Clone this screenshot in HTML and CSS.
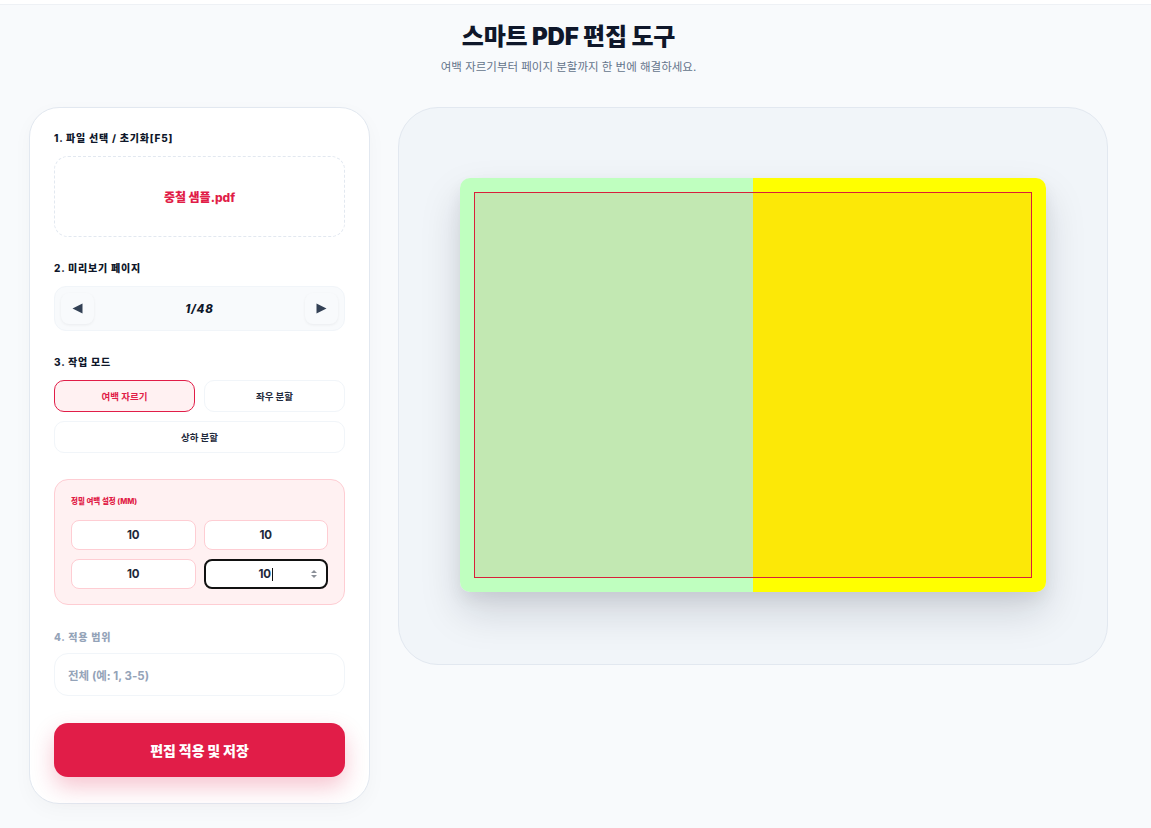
FILE: index.html
```html
<!DOCTYPE html>
<html lang="ko">
<head>
<meta charset="utf-8">
<title>스마트 PDF 편집 도구</title>
<link rel="stylesheet" href="styles.css">
</head>
<body>
<div class="topbar"></div>
<div class="wrap">
<header class="header">
  <h1 class="title">스마트 PDF 편집 도구</h1>
  <p class="subtitle">여백 자르기부터 페이지 분할까지 한 번에 해결하세요.</p>
</header>
<main class="layout">
  <aside class="panel">
    <section class="group">
      <div class="label">1. 파일 선택 / 초기화[F5]</div>
      <div class="dropzone">중철 샘플.pdf</div>
    </section>
    <section class="group">
      <div class="label">2. 미리보기 페이지</div>
      <div class="pager">
        <button class="pager-btn"><svg width="11" height="11" viewBox="0 0 11 11"><path d="M0.5 5.5 L10.5 0.5 L10.5 10.5 Z" fill="#334155"/></svg></button>
        <span class="pager-count">1/48</span>
        <button class="pager-btn"><svg width="11" height="11" viewBox="0 0 11 11"><path d="M10.5 5.5 L0.5 0.5 L0.5 10.5 Z" fill="#334155"/></svg></button>
      </div>
    </section>
    <section class="group">
      <div class="label">3. 작업 모드</div>
      <div class="modes">
        <button class="mode active">여백 자르기</button>
        <button class="mode">좌우 분할</button>
        <button class="mode wide">상하 분할</button>
      </div>
    </section>
    <section class="margins">
      <div class="margins-label">정밀 여백 설정 (MM)</div>
      <div class="margin-grid">
        <div class="num">10</div>
        <div class="num">10</div>
        <div class="num">10</div>
        <div class="num focus"><span class="num-val">10<span class="caret"></span></span><span class="spin"><svg width="8" height="12" viewBox="0 0 8 12"><path d="M1 5 L4 2 L7 5 Z" fill="#8a8f98"/><path d="M1 7 L4 10 L7 7 Z" fill="#8a8f98"/></svg></span></div>
      </div>
    </section>
    <section class="group range">
      <div class="label muted">4. 적용 범위</div>
      <div class="range-input">전체 (예: 1, 3-5)</div>
    </section>
    <button class="submit">편집 적용 및 저장</button>
  </aside>
  <section class="stage">
    <div class="page">
      <div class="half left"></div>
      <div class="half right"></div>
      <div class="crop"></div>
    </div>
  </section>
</main>
</div>
</body>
</html>
```
FILE: styles.css
```css
* { box-sizing: border-box; }
html, body { margin: 0; padding: 0; }
body {
  background: #f8fafc;
  font-family: Inter, "Noto Sans CJK KR", "Noto Sans", sans-serif;
  color: #0f172a;
  width: 1151px;
  height: 828px;
  overflow: hidden;
}
.topbar {
  height: 5px;
  background: #ffffff;
  border-bottom: 1px solid #eef1f5;
}
.wrap { width: 1137px; }
.header {
  text-align: center;
  padding-top: 17px;
}
.title {
  margin: 0;
  font-size: 24px;
  font-weight: 900;
  letter-spacing: -0.2px;
  line-height: 30px;
  color: #0f172a;
}
.subtitle {
  margin: 7px 0 0;
  font-size: 11.5px;
  line-height: 16px;
  color: #64748b;
}
.layout {
  display: flex;
  align-items: flex-start;
  gap: 28px;
  padding-left: 29px;
  margin-top: 32px;
}
.panel {
  width: 341px;
  background: #ffffff;
  border: 1px solid #e2e8f0;
  border-radius: 30px;
  padding: 24px 24px 26px;
  display: flex;
  flex-direction: column;
  box-shadow: 0 6px 20px rgba(15, 23, 42, 0.03);
}
.group { margin-bottom: 25px; }
.label {
  font-size: 10px;
  font-weight: 800;
  letter-spacing: 0.8px;
  color: #0f172a;
  line-height: 12px;
  margin-bottom: 12px;
}
.label.muted { color: #94a3b8; margin-bottom: 10px; }
.dropzone {
  height: 81px;
  border: 1px dashed #e2e8f0;
  border-radius: 14px;
  display: flex;
  align-items: center;
  justify-content: center;
  color: #e11d48;
  font-size: 12px;
  font-weight: 800;
}
.pager {
  height: 45px;
  background: #f8fafc;
  border: 1px solid #f1f5f9;
  border-radius: 12px;
  display: flex;
  align-items: center;
  justify-content: space-between;
  padding: 0 6px;
}
.pager-btn {
  width: 33px;
  height: 31px;
  border: none;
  border-radius: 8px;
  background: #f8fafc;
  box-shadow: 0 1px 3px rgba(15, 23, 42, 0.06);
  padding: 0;
  display: flex;
  align-items: center;
  justify-content: center;
}
.pager-count {
  font-size: 11.5px;
  font-weight: 800;
  font-style: italic;
  letter-spacing: 0.8px;
  color: #0f172a;
}
.modes {
  display: grid;
  grid-template-columns: 1fr 1fr;
  gap: 9px;
}
.mode {
  height: 32px;
  border: 1px solid #f1f5f9;
  background: #ffffff;
  border-radius: 10px;
  font-family: inherit;
  font-size: 9.5px;
  font-weight: 700;
  color: #1e293b;
  padding: 0;
}
.mode.wide { grid-column: 1 / span 2; }
.mode.active {
  background: #fff1f2;
  border-color: #e11d48;
  color: #e11d48;
}
.margins {
  background: #fff1f2;
  border: 1px solid #fecdd3;
  border-radius: 14px;
  padding: 17px 16px 15px;
  margin-top: 1px;
  margin-bottom: 26px;
}
.margins-label {
  font-size: 7.5px;
  font-weight: 800;
  color: #e11d48;
  line-height: 10px;
  margin-bottom: 13px;
}
.margin-grid {
  display: grid;
  grid-template-columns: 1fr 1fr;
  column-gap: 8px;
  row-gap: 9px;
}
.num {
  height: 30px;
  background: #ffffff;
  border: 1px solid #fecdd3;
  border-radius: 8px;
  display: flex;
  align-items: center;
  justify-content: center;
  font-size: 11.5px;
  font-weight: 700;
  color: #1e293b;
  position: relative;
}
.num.focus {
  border: 2px solid #111111;
}
.num-val { display: inline-flex; align-items: center; }
.caret {
  display: inline-block;
  width: 1px;
  height: 13px;
  background: #111111;
  margin-left: 1px;
}
.spin {
  position: absolute;
  right: 8px;
  top: 7px;
  display: flex;
}
.range { margin-bottom: 27px; }
.range-input {
  height: 43px;
  border: 1px solid #f1f5f9;
  border-radius: 14px;
  display: flex;
  align-items: center;
  padding-left: 13px;
  font-size: 11.5px;
  font-weight: 700;
  color: #94a3b8;
}
.submit {
  height: 54px;
  border: none;
  border-radius: 14px;
  background: #e11d48;
  color: #ffffff;
  font-family: inherit;
  font-size: 14px;
  font-weight: 900;
  box-shadow: 0 10px 22px rgba(225, 29, 72, 0.25);
}
.stage {
  width: 710px;
  height: 558px;
  background: #f1f5f9;
  border: 1px solid #e2e8f0;
  border-radius: 40px;
  display: flex;
  align-items: center;
  justify-content: center;
}
.page {
  width: 586px;
  height: 414px;
  margin-top: -2px;
  border-radius: 10px;
  overflow: hidden;
  display: flex;
  position: relative;
  box-shadow: 0 20px 40px rgba(15, 23, 42, 0.15), 0 8px 16px rgba(15, 23, 42, 0.06);
}
.half { flex: 1; }
.half.left { background: #bfffbf; }
.half.right { background: #ffff00; }
.crop {
  position: absolute;
  left: 14px;
  top: 14px;
  right: 14px;
  bottom: 14px;
  border: 1px solid #d8203a;
  background: rgba(225, 29, 72, 0.1);
}
```
